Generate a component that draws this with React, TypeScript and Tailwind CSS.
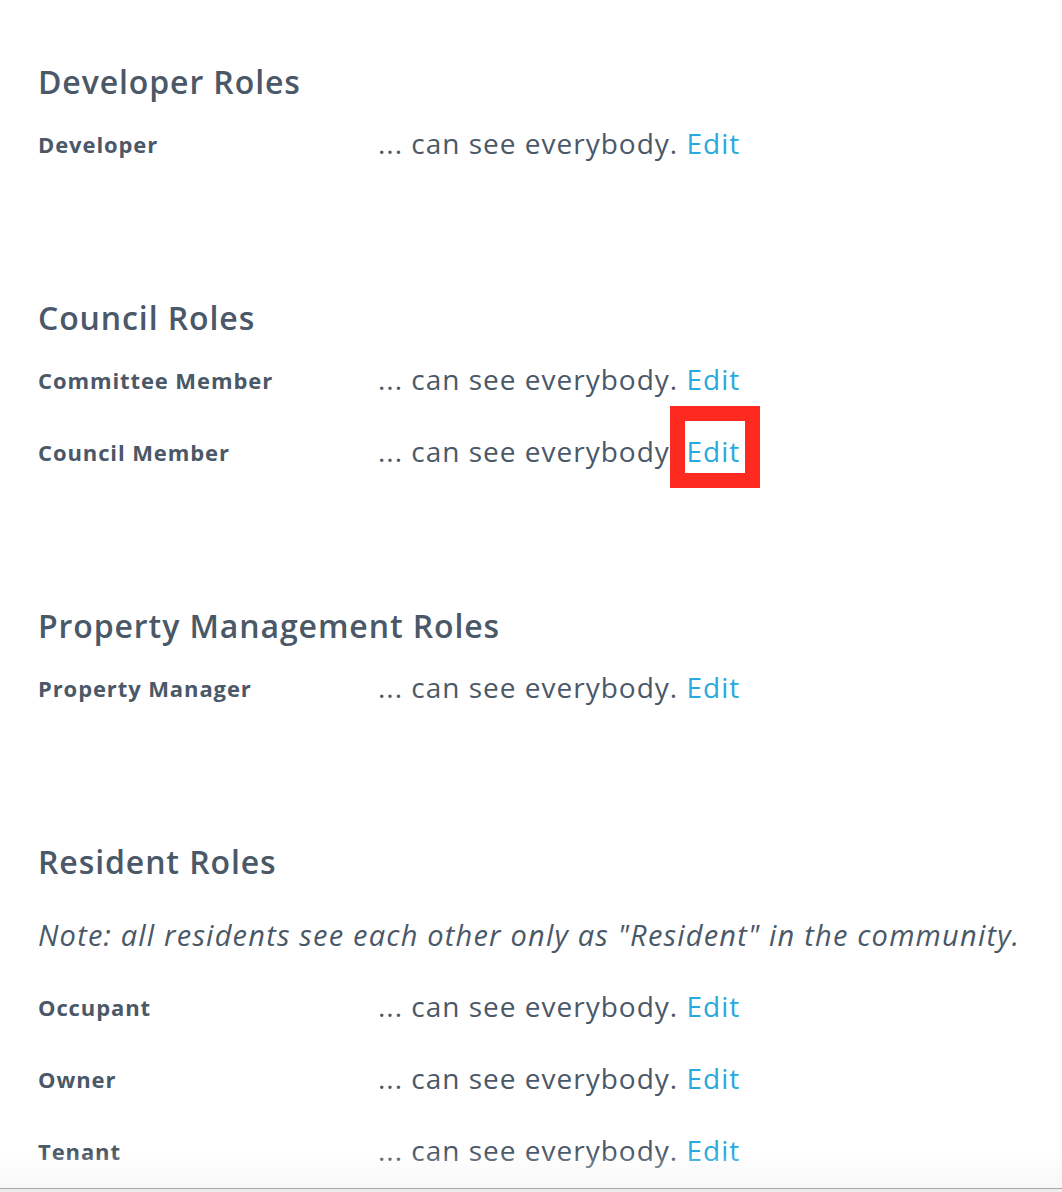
const sections = [
  {
    title: "Developer Roles",
    roles: ["Developer"],
  },
  {
    title: "Council Roles",
    roles: ["Committee Member", "Council Member"],
  },
  {
    title: "Property Management Roles",
    roles: ["Property Manager"],
  },
  {
    title: "Resident Roles",
    note: 'Note: all residents see each other only as "Resident" in the community.',
    roles: ["Occupant", "Owner", "Tenant"],
  },
];

function RoleRow({ name, highlighted }: { name: string; highlighted?: boolean }) {
  return (
    <div className="flex items-center h-[72px]">
      <div className="w-[340px] shrink-0 text-[22px] font-bold leading-[30px] tracking-[0.9px]">{name}</div>
      <div className="text-[28px] leading-[36px] tracking-[1px] -mt-[3px]">
        ... can see everybody.{" "}
        <span className="relative text-[#29a9dc] cursor-pointer">
          Edit
          {highlighted && (
            <span className="absolute left-[-17px] top-[-26px] w-[90px] h-[82px] border-[15px] border-[#ff2a1f] pointer-events-none" />
          )}
        </span>
      </div>
    </div>
  );
}

export default function App() {
  return (
    <div className="relative w-[1062px] h-[1192px] bg-white text-[#4a5868] overflow-hidden flex flex-col" style={{ fontFamily: "'Open Sans', sans-serif" }}>
      <div className="flex-1 px-[38px] pt-[56px]">
        {sections.map((section, i) => (
          <div key={section.title} className={i > 0 ? "mt-[112px]" : ""}>
            <h2 className="h-[52px] flex items-center text-[32px] font-semibold tracking-[0.9px]">{section.title}</h2>
            {section.note && (
              <div className="mt-[11px] h-[72px] flex items-center text-[29px] italic tracking-[1.2px]">{section.note}</div>
            )}
            {section.roles.map((role) => (
              <RoleRow key={role} name={role} highlighted={role === "Council Member"} />
            ))}
          </div>
        ))}
      </div>
      {/* soft fade at the bottom edge */}
      <div className="absolute left-0 right-0 bottom-[4px] h-[36px] bg-gradient-to-b from-transparent to-[#f4f4f4]/70 pointer-events-none" />
      <div className="h-[4px] border-t border-[#a9a9a9] bg-[#ececec]" />
    </div>
  );
}
